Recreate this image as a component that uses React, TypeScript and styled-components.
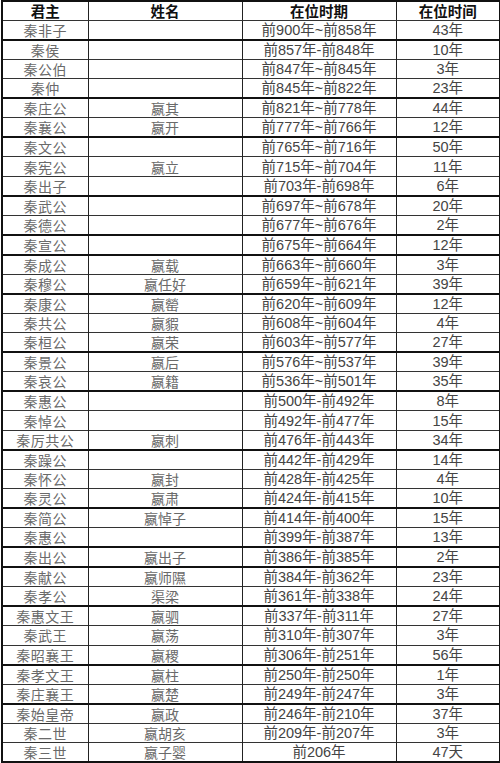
import styled, { createGlobalStyle } from "styled-components";

const GlobalStyle = createGlobalStyle`
  html, body {
    margin: 0;
    padding: 0;
    background: #ffffff;
  }
`;

type Ruler = {
  title: string;
  name?: string;
  period: string;
  span: string;
  heavy?: boolean;
};

const RULERS: Ruler[] = [
  { title: "秦非子", period: "前900年~前858年", span: "43年", heavy: true },
  { title: "秦侯", period: "前857年-前848年", span: "10年" },
  { title: "秦公伯", period: "前847年~前845年", span: "3年" },
  { title: "秦仲", period: "前845年~前822年", span: "23年", heavy: true },
  { title: "秦庄公", name: "嬴其", period: "前821年~前778年", span: "44年" },
  { title: "秦襄公", name: "嬴开", period: "前777年~前766年", span: "12年", heavy: true },
  { title: "秦文公", period: "前765年~前716年", span: "50年" },
  { title: "秦宪公", name: "嬴立", period: "前715年~前704年", span: "11年" },
  { title: "秦出子", period: "前703年-前698年", span: "6年", heavy: true },
  { title: "秦武公", period: "前697年~前678年", span: "20年" },
  { title: "秦德公", period: "前677年~前676年", span: "2年", heavy: true },
  { title: "秦宣公", period: "前675年~前664年", span: "12年", heavy: true },
  { title: "秦成公", name: "嬴载", period: "前663年~前660年", span: "3年" },
  { title: "秦穆公", name: "嬴任好", period: "前659年~前621年", span: "39年", heavy: true },
  { title: "秦康公", name: "嬴罃", period: "前620年~前609年", span: "12年" },
  { title: "秦共公", name: "嬴貑", period: "前608年~前604年", span: "4年" },
  { title: "秦桓公", name: "嬴荣", period: "前603年~前577年", span: "27年", heavy: true },
  { title: "秦景公", name: "嬴后", period: "前576年~前537年", span: "39年" },
  { title: "秦哀公", name: "嬴籍", period: "前536年~前501年", span: "35年", heavy: true },
  { title: "秦惠公", period: "前500年-前492年", span: "8年" },
  { title: "秦悼公", period: "前492年-前477年", span: "15年" },
  { title: "秦厉共公", name: "嬴刺", period: "前476年-前443年", span: "34年", heavy: true },
  { title: "秦躁公", period: "前442年-前429年", span: "14年" },
  { title: "秦怀公", name: "嬴封", period: "前428年-前425年", span: "4年" },
  { title: "秦灵公", name: "嬴肃", period: "前424年-前415年", span: "10年", heavy: true },
  { title: "秦简公", name: "嬴悼子", period: "前414年-前400年", span: "15年" },
  { title: "秦惠公", period: "前399年-前387年", span: "13年", heavy: true },
  { title: "秦出公", name: "嬴出子", period: "前386年-前385年", span: "2年", heavy: true },
  { title: "秦献公", name: "嬴师隰", period: "前384年-前362年", span: "23年" },
  { title: "秦孝公", name: "渠梁", period: "前361年-前338年", span: "24年", heavy: true },
  { title: "秦惠文王", name: "嬴驷", period: "前337年-前311年", span: "27年" },
  { title: "秦武王", name: "嬴荡", period: "前310年-前307年", span: "3年" },
  { title: "秦昭襄王", name: "嬴稷", period: "前306年-前251年", span: "56年", heavy: true },
  { title: "秦孝文王", name: "嬴柱", period: "前250年-前250年", span: "1年" },
  { title: "秦庄襄王", name: "嬴楚", period: "前249年-前247年", span: "3年", heavy: true },
  { title: "秦始皇帝", name: "嬴政", period: "前246年-前210年", span: "37年" },
  { title: "秦二世", name: "嬴胡亥", period: "前209年-前207年", span: "3年" },
  { title: "秦三世", name: "嬴子婴", period: "前206年", span: "47天" },
];

const Sheet = styled.table`
  width: 498px;
  margin: 0 0 0 1px;
  border-collapse: collapse;
  table-layout: fixed;
  border: 2px solid #111;
`;

const HeadRow = styled.tr`
  height: 19px;
`;

const Row = styled.tr<{ $heavy?: boolean }>`
  height: 19.46px;
  border-bottom: ${(p) => (p.$heavy ? "2px solid #111" : "1px solid #333")};
`;

const HeadCell = styled.th`
  padding: 0;
  border: 1px solid #222;
  border-bottom: 1px solid #333;
  font-family: "Noto Sans CJK SC", sans-serif;
  font-weight: 700;
  font-size: 14.5px;
  line-height: 18px;
  color: #111;
  text-align: center;
`;

const Cell = styled.td<{ $kind: "title" | "name" | "period" | "span" }>`
  padding: 0;
  border-left: 1px solid #222;
  border-right: 1px solid #222;
  text-align: center;
  white-space: nowrap;
  overflow: hidden;
  line-height: 18px;
  font-size: ${(p) => (p.$kind === "period" || p.$kind === "span" ? "14.5px" : "14px")};
  font-family: ${(p) =>
    p.$kind === "period" || p.$kind === "span"
      ? `"Liberation Sans", "Noto Sans CJK SC", sans-serif`
      : `"Noto Sans CJK SC", sans-serif`};
  color: ${(p) => (p.$kind === "period" || p.$kind === "span" ? "#444" : "#6a6a6a")};
  letter-spacing: ${(p) => (p.$kind === "title" ? "0.5px" : "0")};
`;

export default function App() {
  return (
    <>
      <GlobalStyle />
      <Sheet>
        <colgroup>
          <col style={{ width: 86 }} />
          <col style={{ width: 154 }} />
          <col style={{ width: 154 }} />
          <col style={{ width: 104 }} />
        </colgroup>
        <thead>
          <HeadRow>
            <HeadCell>君主</HeadCell>
            <HeadCell>姓名</HeadCell>
            <HeadCell>在位时期</HeadCell>
            <HeadCell>在位时间</HeadCell>
          </HeadRow>
        </thead>
        <tbody>
          {RULERS.map((r, i) => (
            <Row key={i} $heavy={r.heavy}>
              <Cell $kind="title">{r.title}</Cell>
              <Cell $kind="name">{r.name ?? ""}</Cell>
              <Cell $kind="period">{r.period}</Cell>
              <Cell $kind="span">{r.span}</Cell>
            </Row>
          ))}
        </tbody>
      </Sheet>
    </>
  );
}
